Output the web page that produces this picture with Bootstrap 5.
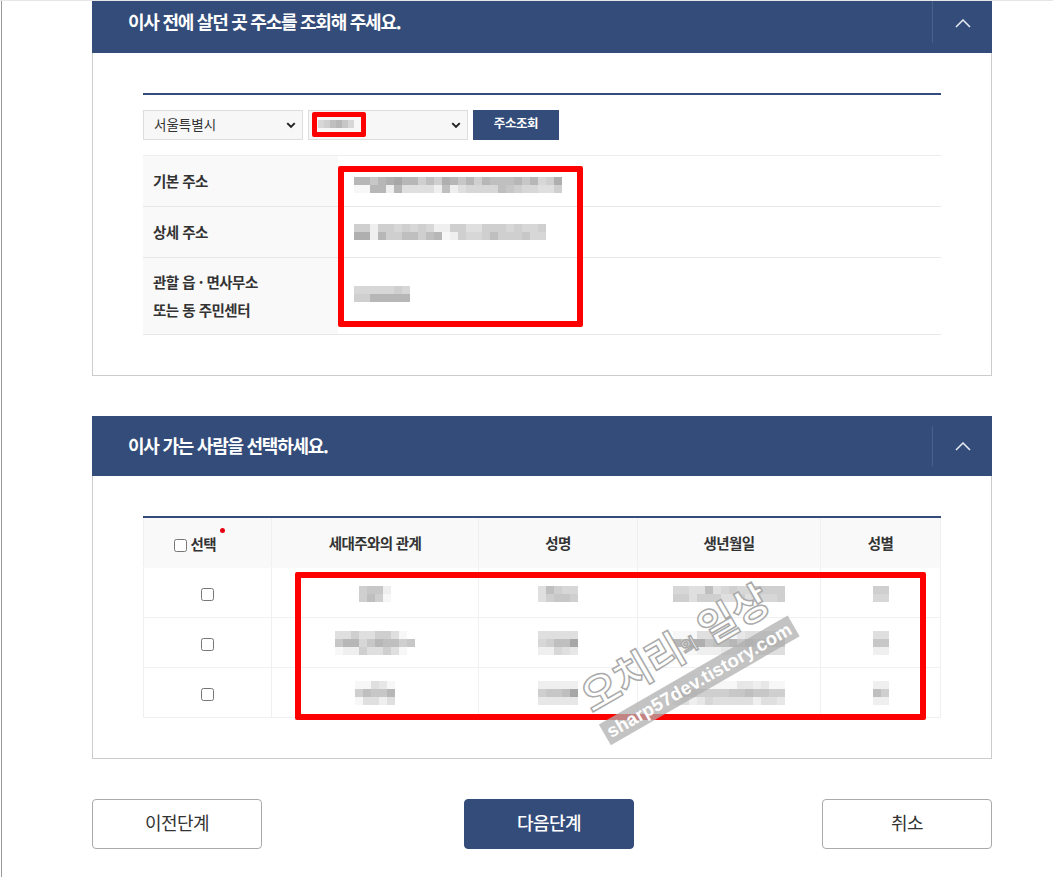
<!DOCTYPE html>
<html lang="ko">
<head>
<meta charset="utf-8">
<title>전입신고</title>
<link href="https://cdn.jsdelivr.net/npm/bootstrap@5.3.0/dist/css/bootstrap.min.css" rel="stylesheet">
<style>
html,body{height:877px;overflow:hidden}
body{position:relative;background:#fff;font-family:"Noto Sans CJK KR","Liberation Sans",sans-serif;color:#333;border-top:1px solid #e6e6e6;padding:0 61px 0 92px}
body::before{content:"";position:absolute;left:1px;top:-1px;bottom:0;width:1px;background:#9a9a9a}
.sec-head{background:#334c79;color:#fff;height:60px;padding-left:36px}
.sec-head.cut{height:52px;padding-bottom:10px}
.sec-title{font-size:18px;font-weight:700;letter-spacing:-1.25px;margin:0 0 2px;line-height:1}
.sec-tog{width:60px;height:40px;border-left:1px solid #47608c;background:none;border-top:0;border-right:0;border-bottom:0;padding:0}
.cut .sec-tog{height:42px;padding-top:2px}
.sec-body{border:1px solid #ccc;border-top:0;padding:40px 50px 41px}
.sec1-body{height:323px}
.sec2{margin-top:40px}
.sec2-body{height:283px}
.rule-box{border-top:2px solid #334c79;padding-top:15px}
.sel-row{gap:5px}
.addr-sel{width:160px;height:30px;font-size:13.5px;line-height:26px;padding:0 20px 2px 10px;border-radius:0;border-color:#ddd;background-color:#f7f7f7;background-image:url("data:image/svg+xml,%3csvg xmlns='http://www.w3.org/2000/svg' viewBox='0 0 16 16'%3e%3cpath fill='none' stroke='%23222' stroke-width='3.2' d='M2 5l6 6 6-6'/%3e%3c/svg%3e");background-position:right 6px center;background-size:10px;color:#333;box-shadow:none}
.addr-btn{width:86px;height:30px;background:#334c79;color:#fff;font-size:12.5px;font-weight:700;border:0;border-radius:0;padding:0 0 3px;letter-spacing:-.4px}
.addr-tb{margin:15px 0 0;width:100%;table-layout:fixed;border-top:1px solid #eee}
.addr-tb th,.addr-tb td{border-bottom:1px solid #e8e8e8;padding:0 10px;vertical-align:middle;font-size:14.5px}
.addr-tb th{width:195px;background:#f9f9f9;font-weight:700;letter-spacing:-.5px;color:#333;line-height:28px;padding-bottom:1px}
.addr-tb td{padding-left:16px}
.addr-tb tr{height:51px}
.addr-tb tr.tall{height:77px}
.m-a{margin-top:6px}
.m-b{margin-bottom:4px}
.m-c{margin-bottom:6px}
.ppl-tb{margin:0;width:100%;table-layout:fixed;border-top:2px solid #334c79;font-size:14.5px}
.ppl-tb th,.ppl-tb td{border:1px solid #f0f0f0;border-top:0;text-align:center;vertical-align:middle;padding:0}
.ppl-tb th{background:#f9f9f9;height:50px;font-weight:700;letter-spacing:-.6px;color:#333;border-bottom-color:#f9f9f9;padding-top:1px}
.ppl-tb th.pick{padding-right:25px;padding-top:3px}
.ppl-tb td{height:50px}
.ppl-tb input{width:13px;height:13px;margin:0;vertical-align:middle}
.req-dot{display:inline-block;width:5px;height:5px;border-radius:50%;background:#e60012;vertical-align:top;margin:-5px -9px 0 4px}
.mosaic{display:inline-block;vertical-align:middle}
.foot-btn{width:170px;height:50px;font-size:18px;letter-spacing:-.5px;border-radius:4px;padding:0 0 3px;border:1px solid #aaa;color:#333;background:#fff}
.foot-btn.go{background:#334c79;border-color:#334c79;color:#fff;font-weight:500;margin-left:14px}
.foot-row{margin-top:40px}
.red-box{position:absolute;border:6px solid #f00;border-radius:2px;pointer-events:none}
.rb1{left:312px;top:111px;width:54px;height:25px;border-width:5px}
.rb2{left:338px;top:165px;width:245px;height:161px}
.rb3{left:295px;top:571px;width:631px;height:148px}
.rb-inner{position:absolute;left:1px;top:3px}
.wm{position:absolute;left:577px;top:618px;width:218px;transform:rotate(-30deg);text-align:center;pointer-events:none}
.wm-big{font-size:41px;line-height:44px;font-weight:700;color:#fff;-webkit-text-stroke:1.5px #aaa;letter-spacing:-1px;white-space:nowrap;display:block;margin:0 -12px 0 -22px}
.wm-big small{font-size:17px;vertical-align:middle}
.wm-band{display:block;background:rgba(175,175,175,.75);color:#fff;font:700 18.5px/24px "Liberation Sans",sans-serif;letter-spacing:.25px;margin-top:2px;white-space:nowrap}
</style>
</head>
<body>
<section>
  <div class="sec-head cut d-flex align-items-center justify-content-between">
    <h2 class="sec-title">이사 전에 살던 곳 주소를 조회해 주세요.</h2>
    <button class="sec-tog d-flex align-items-center justify-content-center" aria-label="접기"><svg width="16" height="9" viewBox="0 0 16 9"><path d="M1 8l7-7 7 7" fill="none" stroke="#e8edf5" stroke-width="1.5"/></svg></button>
  </div>
  <div class="sec-body sec1-body">
    <div class="rule-box">
      <div class="d-flex sel-row">
        <select class="form-select addr-sel"><option>서울특별시</option></select>
        <select class="form-select addr-sel"><option> </option></select>
        <button class="btn addr-btn">주소조회</button>
      </div>
      <table class="addr-tb">
        <tr><th scope="row">기본 주소</th><td><svg class="mosaic m-a" data-m="66865466979568696777686a95|ee66d6bbbbd7dbaaaa789aabb9"></svg></td></tr>
        <tr><th scope="row">상세 주소</th><td><svg class="mosaic m-b" data-m="99d99a9a9add99bb999a9aa9|55d69977976ed9aa979998aa"></svg></td></tr>
        <tr class="tall"><th scope="row">관할 읍 · 면사무소<br>또는 동 주민센터</th><td><svg class="mosaic m-c" data-m="aaaaa9a|9966666"></svg></td></tr>
      </table>
    </div>
  </div>
</section>
<section class="sec2">
  <div class="sec-head d-flex align-items-center justify-content-between">
    <h2 class="sec-title">이사 가는 사람을 선택하세요.</h2>
    <button class="sec-tog d-flex align-items-center justify-content-center" aria-label="접기"><svg width="16" height="9" viewBox="0 0 16 9"><path d="M1 8l7-7 7 7" fill="none" stroke="#e8edf5" stroke-width="1.5"/></svg></button>
  </div>
  <div class="sec-body sec2-body">
    <table class="ppl-tb">
      <colgroup><col style="width:128px"><col style="width:207px"><col style="width:159px"><col style="width:183px"><col></colgroup>
      <thead><tr>
        <th scope="col" class="pick"><input type="checkbox" aria-label="전체 선택"> 선택<span class="req-dot"></span></th>
        <th scope="col">세대주와의 관계</th><th scope="col">성명</th><th scope="col">생년월일</th><th scope="col">성별</th>
      </tr></thead>
      <tbody>
        <tr><td><input type="checkbox" aria-label="선택"></td>
          <td><svg class="mosaic" data-m="988d|979e"></svg></td>
          <td><svg class="mosaic" data-m="b79aa|b9889"></svg></td>
          <td><svg class="mosaic" data-m="aabb7ba9aa8999|99b999bb9b9aa9"></svg></td>
          <td><svg class="mosaic" data-m="99|aa"></svg></td></tr>
        <tr><td><input type="checkbox" aria-label="선택"></td>
          <td><svg class="mosaic" data-m="bb9bb99bef|866a867798|edd9bb9bef"></svg></td>
          <td><svg class="mosaic" data-m="bbbbb|a9774|ddabc"></svg></td>
          <td><svg class="mosaic" data-m="eeebbbeecbbbbb|68558776868778|eeedddcdcbbbbb"></svg></td>
          <td><svg class="mosaic" data-m="bb|88|dd"></svg></td></tr>
        <tr><td><input type="checkbox" aria-label="선택"></td>
          <td><svg class="mosaic" data-m="eebce|97886|ebbdb"></svg></td>
          <td><svg class="mosaic" data-m="ddddd|98874|ccccc"></svg></td>
          <td><svg class="mosaic" data-m="eeeeeeeeccdcee|96899998878899|cbdcabbbbbdbbc"></svg></td>
          <td><svg class="mosaic" data-m="dd|79|dd"></svg></td></tr>
      </tbody>
    </table>
  </div>
</section>
<div class="foot-row d-flex justify-content-between">
  <button class="btn foot-btn">이전단계</button>
  <button class="btn foot-btn go">다음단계</button>
  <button class="btn foot-btn">취소</button>
</div>
<div class="red-box rb1"><svg class="mosaic rb-inner" data-m="a9768a|a9768a"></svg></div>
<div class="red-box rb2"></div>
<div class="red-box rb3"></div>
<div class="wm">
  <span class="wm-big">오치리<small>의</small> 일상</span>
  <span class="wm-band">sharp57dev.tistory.com</span>
</div>
<script>
document.querySelectorAll('svg.mosaic').forEach(function(s){
  var rows=s.dataset.m.split('|'),small=s.classList.contains('rb-inner'),c=small?6:8,h=small?4:8,out='';
  rows.forEach(function(r,y){for(var x=0;x<r.length;x++){var d=parseInt(r[x],16),g=Math.round(135+d*8);
    out+='<rect x="'+x*c+'" y="'+y*h+'" width="'+c+'" height="'+h+'" fill="rgb('+g+','+g+','+g+')"/>';}});
  s.setAttribute('width',rows[0].length*c);s.setAttribute('height',rows.length*h);s.innerHTML=out;
});
</script>
</body>
</html>
